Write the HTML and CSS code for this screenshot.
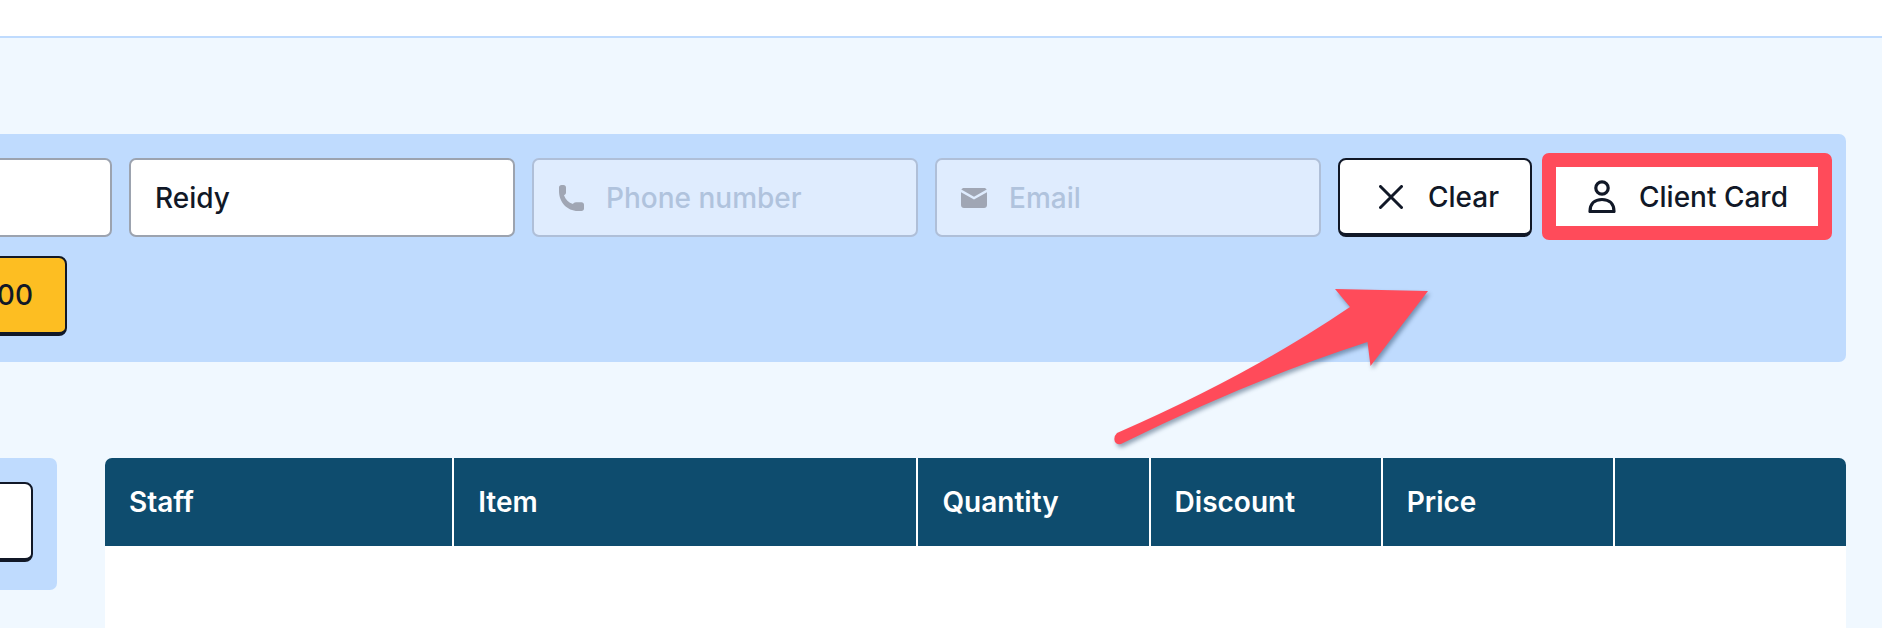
FILE: index.html
```html
<!DOCTYPE html>
<html lang="en">
<head>
    <meta charset="UTF-8">
    <title>Checkout</title>
    <link rel="stylesheet" href="styles.css">
</head>
<body>
    <div class="page">
        <div class="topbar"></div>
        <main class="content">
            <section class="client-panel">
                <div class="client-row">
                    <div class="field"></div>
                    <div class="field"><span class="field-value">Reidy</span></div>
                    <div class="field field-disabled">
                        <svg class="field-icon" viewBox="0 0 26 26">
                            <path d="M1 2.500C1 1 2 0 3.500 0H5.500C7 0 8 1 8 2.500V7.500C8 9 7 9.800 6 10.200C7.500 14.500 10.500 17.500 15 19C15.500 18 16.500 17.300 18 17.300H23.500C25 17.300 26 18.300 26 19.800V23.500C26 25 25 26 23.500 26H20C9 26 1 17 1 6Z"/>
                        </svg>
                        <span class="field-placeholder">Phone number</span>
                    </div>
                    <div class="field field-disabled">
                        <svg class="field-icon" viewBox="0 0 26 20">
                            <path d="M0 4.200V17C0 18.700 1.300 20 3 20H23C24.700 20 26 18.700 26 17V4.200L13 11.500Z"/>
                            <path d="M0.300 1.500C0.800 0.600 1.800 0 3 0H23C24.200 0 25.200 0.600 25.700 1.500L13 8.700Z"/>
                        </svg>
                        <span class="field-placeholder">Email</span>
                    </div>
                    <button class="btn btn-clear">
                        <svg class="btn-icon" viewBox="0 0 24 24">
                            <path d="M1.500 1.500L22.500 22.500M22.500 1.500L1.500 22.500"/>
                        </svg>
                        Clear
                    </button>
                    <button class="btn btn-client">
                        <svg class="btn-icon-person" viewBox="0 0 28 33">
                            <circle cx="14" cy="8" r="6.200"/>
                            <path d="M2 31.500C2 24 6.500 19.500 14 19.500C21.500 19.500 26 24 26 31.500Z"/>
                        </svg>
                        Client Card
                    </button>
                </div>
                <div class="client-row">
                    <button class="btn btn-balance">0.00</button>
                </div>
            </section>
            <section class="sale-row">
                <aside class="side-panel">
                    <button class="btn btn-side"></button>
                </aside>
                <div class="sale-table">
                    <div class="sale-head">
                        <div class="sale-cell">Staff</div>
                        <div class="sale-cell">Item</div>
                        <div class="sale-cell">Quantity</div>
                        <div class="sale-cell">Discount</div>
                        <div class="sale-cell">Price</div>
                        <div class="sale-cell"></div>
                    </div>
                    <div class="sale-body"></div>
                </div>
            </section>
        </main>

        <!-- annotation drawn over the screenshot -->
        <svg class="arrow" viewBox="0 0 340 170">
            <path d="M17 153Q150 95 250 27L235 9L328 11L270.500 86L267.500 62Q150 100 23 163Q18 166 15 162Q13 157 17 153Z"/>
        </svg>
    </div>
</body>
</html>
```

FILE: styles.css
```css
* {
    box-sizing: border-box;
}
body {
    margin: 0;
    font-family: 'Inter', sans-serif;
    color: #111827;
}
.page {
    position: relative;
    height: 628px;
    overflow: hidden;
    background-color: #f0f8ff;
}
.topbar {
    height: 38px;
    background: white;
    border-bottom: 2px solid #bfdbfe;
}
.content {
    margin-left: -300px;
    padding: 96px 36px 0 0;
}
.client-panel {
    display: flex;
    flex-direction: column;
    gap: 19px;
    height: 228px;
    padding: 24px 14px 0 26px;
    background: #bfdbfe;
    border-radius: 0 7px 7px 0;
}
.client-row {
    display: flex;
    align-items: flex-start;
    gap: 17px;
    height: 79px;
}
.field {
    flex: none;
    display: flex;
    align-items: center;
    gap: 22px;
    width: 386px;
    height: 79px;
    padding: 1px 24px 0;
    background: white;
    border: 2px solid #9ca3af;
    border-radius: 7px;
    font-size: 28px;
    font-weight: 500;
}
.field-disabled {
    background: #dfecfe;
    border-color: #afbfd8;
}
.field-icon {
    width: 26px;
    fill: #a0a6b4;
}
.field-placeholder {
    color: #b0c3dd;
}
.btn {
    flex: none;
    display: flex;
    align-items: center;
    height: 79px;
    background: white;
    border: 2px solid #111827;
    border-bottom-width: 4px;
    border-radius: 8px;
    font-family: inherit;
    font-size: 28px;
    font-weight: 500;
    color: #111827;
}
.btn-clear {
    gap: 25px;
    width: 194px;
    padding: 0 0 0 39px;
}
.btn-icon {
    width: 24px;
    height: 24px;
    fill: none;
    stroke: #111827;
    stroke-width: 3;
    stroke-linecap: round;
}
.btn-client {
    gap: 23px;
    width: 290px;
    height: 87px;
    margin: -5px 0 0 -7px;
    padding: 0 0 0 32px;
    border: 14px solid #ff4b5a;
    border-radius: 7px;
}
.btn-icon-person {
    width: 28px;
    height: 33px;
    fill: none;
    stroke: #111827;
    stroke-width: 3.2;
    stroke-linejoin: round;
}
.btn-balance {
    justify-content: flex-end;
    width: 341px;
    height: 80px;
    padding-right: 32px;
    background: #fdbe22;
}
.sale-row {
    display: flex;
    gap: 48px;
    margin-top: 96px;
}
.side-panel {
    flex: none;
    width: 357px;
    height: 132px;
    padding: 24px 24px 0 0;
    background: #bfdbfe;
    border-radius: 0 7px 7px 0;
}
.btn-side {
    width: 100%;
    height: 80px;
}
.sale-table {
    flex: 1;
}
.sale-head {
    display: grid;
    grid-template-columns: 3fr 4fr 2fr 2fr 2fr 2fr;
    height: 88px;
    background: #0e4c6e;
    border-radius: 7px 7px 0 0;
    color: white;
    font-size: 28px;
    font-weight: 600;
}
.sale-cell {
    display: flex;
    align-items: center;
    padding-left: 24px;
}
.sale-cell + .sale-cell {
    margin-left: -1px;
    border-left: 2px solid white;
}
.sale-body {
    height: 120px;
    background: white;
}
.arrow {
    position: absolute;
    left: 1100px;
    top: 280px;
    width: 340px;
    height: 170px;
    fill: #ff4b5a;
    filter: drop-shadow(2px 3px 2px rgba(30, 60, 90, 0.45));
}
```
